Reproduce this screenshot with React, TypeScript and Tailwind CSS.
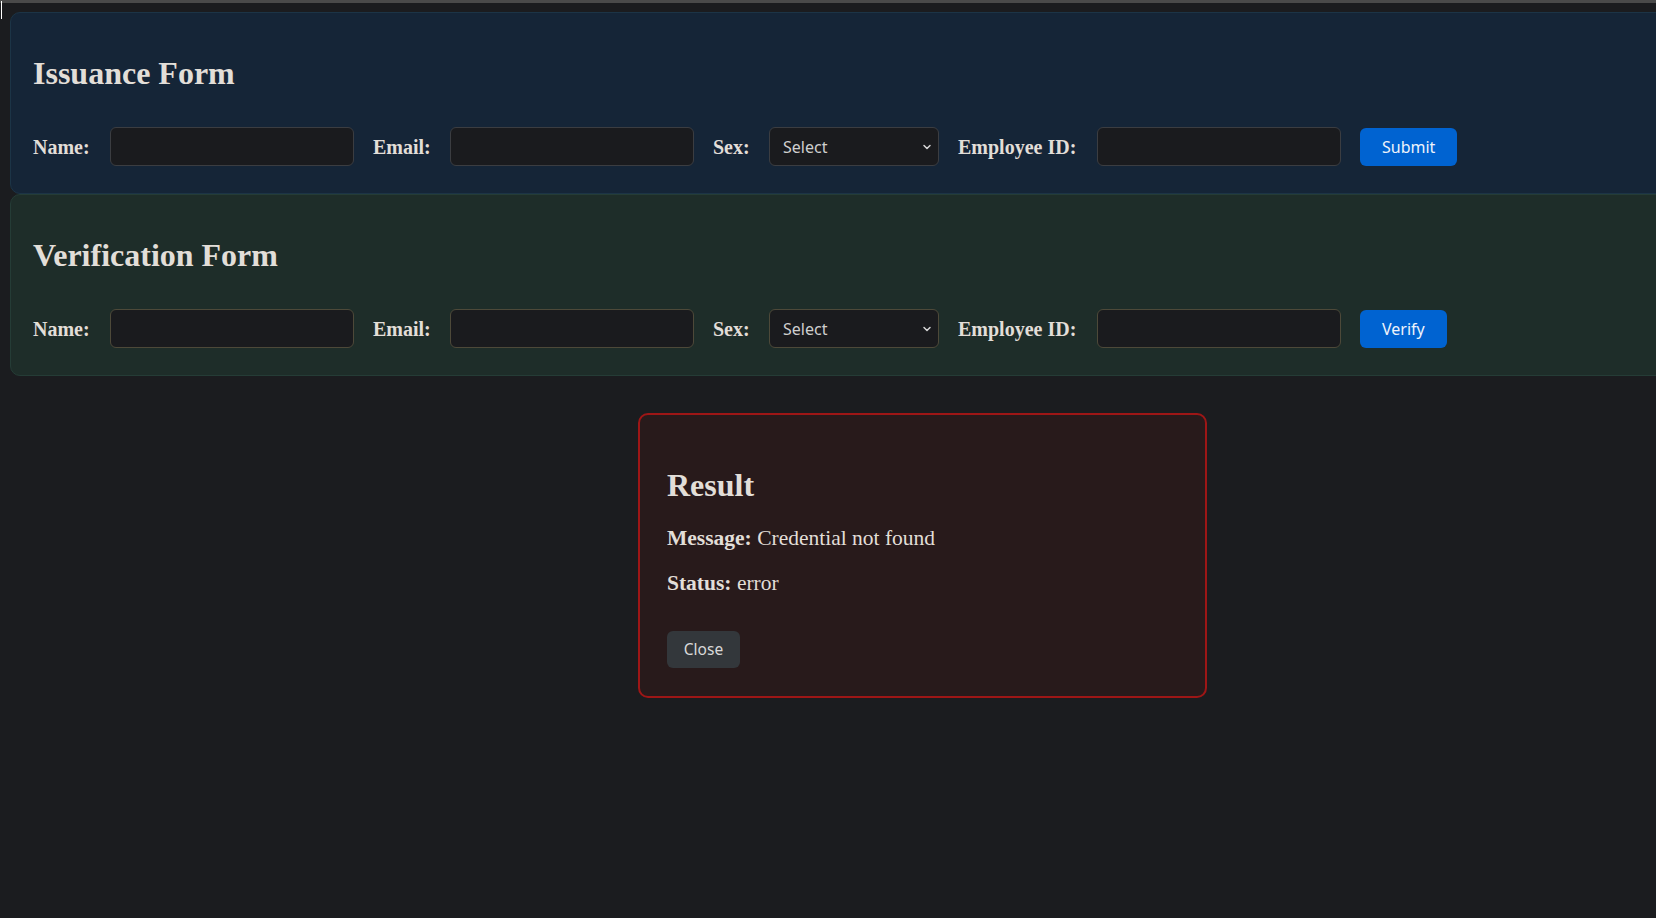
import React from "react";

const serif = "font-['Liberation_Serif',serif]";
const sans = "font-['Noto_Sans',sans-serif]";

function Field({ label, width, children }: { label: string; width: string; children: React.ReactNode }) {
  return (
    <>
      <label className={`${width} shrink-0 whitespace-nowrap text-[20px] font-bold text-[#e2ded8]`}>{label}</label>
      {children}
    </>
  );
}

function Chevron() {
  return (
    <svg width="12" height="12" viewBox="0 0 12 12" className="pointer-events-none absolute right-[6px] top-[14px]">
      <path d="M3 4.5 L6 7.5 L9 4.5" fill="none" stroke="#d6d6d6" strokeWidth="1.5" strokeLinecap="round" strokeLinejoin="round" />
    </svg>
  );
}

function FormPanel({
  title,
  action,
  panel,
  border,
}: {
  title: string;
  action: string;
  panel: string;
  border: string;
}) {
  const input = `h-[39px] w-[244px] shrink-0 rounded-[6px] border ${border} bg-[#1a1b1e] outline-none`;
  return (
    <section className={`w-[1900px] rounded-[10px] border ${panel} pl-[22px] pt-[42px] pb-[27px]`}>
      <h2 className="text-[32px] font-bold leading-[36px] text-[#e2ded8]">{title}</h2>
      <div className="mt-[36px] flex h-[39px] items-center gap-[19px]">
        <Field label="Name:" width="w-[58px]">
          <input className={input} />
        </Field>
        <Field label="Email:" width="w-[58px]">
          <input className={input} />
        </Field>
        <Field label="Sex:" width="w-[37px]">
          <div className="relative h-[39px] w-[170px] shrink-0">
            <select
              defaultValue=""
              className={`h-full w-full appearance-none rounded-[6px] border ${border} bg-[#1a1b1e] pl-[13px] text-[16px] text-[#cfcfcf] outline-none ${sans}`}
            >
              <option value="">Select</option>
              <option value="m">Male</option>
              <option value="f">Female</option>
            </select>
            <Chevron />
          </div>
        </Field>
        <Field label="Employee ID:" width="w-[120px]">
          <input className={input} />
        </Field>
        <button
          className={`h-[38px] shrink-0 rounded-[6px] bg-[#0063d1] px-[22px] text-[16px] text-[#eef3fb] ${sans}`}
        >
          {action}
        </button>
      </div>
    </section>
  );
}

export default function App() {
  return (
    <div className={`relative h-[918px] w-[1656px] overflow-hidden bg-[#1b1c1f] ${serif}`}>
      <div className="h-[3px] w-full bg-[#4a4a4a]" />
      <div className="absolute left-[1px] top-[1px] h-[18px] w-[1px] bg-white" />
      <div className="flex">
        <div className="w-[1px] self-stretch bg-[#1e1a1d]" />
        <div className="pl-[10px] pt-[9px]">
          <FormPanel title="Issuance Form" action="Submit" panel="bg-[#152537] border-[#1c3446]" border="border-[#3b3d41]" />
          <FormPanel title="Verification Form" action="Verify" panel="bg-[#1e2d29] border-[#253c36]" border="border-[#4d4939]" />
          <div className="ml-[628px] mt-[37px] w-[569px] rounded-[10px] border-2 border-[#9e1616] bg-[#281a1b] pl-[27px] pt-[52px] pb-[28px] text-[#e2ded8]">
            <h2 className="text-[32px] font-bold leading-[36px]">Result</h2>
            <p className="mt-[21px] text-[21.5px] leading-[28px]">
              <strong>Message:</strong> Credential not found
            </p>
            <p className="mt-[17px] text-[21.5px] leading-[28px]">
              <strong>Status:</strong> error
            </p>
            <button
              className={`mt-[34px] h-[37px] w-[73px] rounded-[6px] bg-[#33373b] text-[15.5px] text-[#d9d9d9] ${sans}`}
            >
              Close
            </button>
          </div>
        </div>
      </div>
    </div>
  );
}
